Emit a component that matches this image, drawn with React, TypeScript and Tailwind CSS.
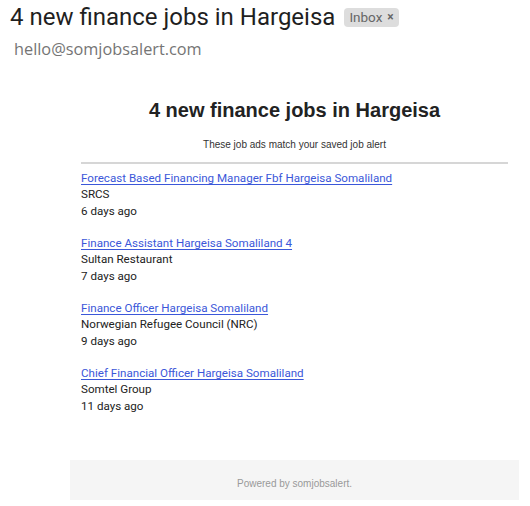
import React from "react";

const jobs = [
  { title: "Forecast Based Financing Manager Fbf Hargeisa Somaliland", company: "SRCS", age: "6 days ago" },
  { title: "Finance Assistant Hargeisa Somaliland 4", company: "Sultan Restaurant", age: "7 days ago" },
  { title: "Finance Officer Hargeisa Somaliland", company: "Norwegian Refugee Council (NRC)", age: "9 days ago" },
  { title: "Chief Financial Officer Hargeisa Somaliland", company: "Somtel Group", age: "11 days ago" },
];

export default function App() {
  return (
    <div className="w-[530px] h-[506px] bg-white overflow-hidden">
      <div className="flex items-center pl-[10px] pt-[3px] h-[30px]">
        <h1
          className="text-[24px] leading-[26px] text-[#1f1f1f]"
          style={{ fontFamily: "Roboto, sans-serif" }}
        >
          4 new finance jobs in Hargeisa
        </h1>
        <span
          className="ml-[9px] mt-[1px] h-[19px] flex items-center px-[5px] rounded-[4px] bg-[#dddddd] text-[#666666] text-[13.5px]"
          style={{ fontFamily: "Roboto, sans-serif" }}
        >
          Inbox<span className="ml-[5px] text-[12px] font-bold">×</span>
        </span>
      </div>
      <div
        className="pl-[14px] mt-[9px] text-[16.3px] leading-[20px] text-[#757575]"
        style={{ fontFamily: "'Open Sans', sans-serif" }}
      >
        hello@somjobsalert.com
      </div>

      <div className="ml-[70px] w-[449px] mt-[39px]">
        <h2
          className="text-center font-bold text-[20px] leading-[24px] text-[#222222]"
          style={{ fontFamily: "'Liberation Sans', Arial, sans-serif" }}
        >
          4 new finance jobs in Hargeisa
        </h2>
        <p
          className="text-center text-[10px] leading-[14px] text-[#333333] mt-[16px]"
          style={{ fontFamily: "'Liberation Sans', Arial, sans-serif" }}
        >
          These job ads match your saved job alert
        </p>
        <div className="mx-[11px] mt-[10px] h-[2px] bg-[#d6d6d6]" />
        <div
          className="px-[11px] pt-[6px] flex flex-col gap-[16.25px]"
          style={{ fontFamily: "Roboto, sans-serif" }}
        >
          {jobs.map((j) => (
            <div key={j.title} className="text-[11.6px] leading-[16.25px] text-[#222222]">
              <a href="#" className="text-[#3b57d9] underline underline-offset-[2px]">
                {j.title}
              </a>
              <div>{j.company}</div>
              <div>{j.age}</div>
            </div>
          ))}
        </div>
        <div
          className="mt-[46px] h-[40px] pt-[7px] bg-[#f5f5f5] flex items-center justify-center text-[10px] text-[#999999]"
          style={{ fontFamily: "'Liberation Sans', Arial, sans-serif" }}
        >
          Powered by somjobsalert.
        </div>
      </div>
    </div>
  );
}
